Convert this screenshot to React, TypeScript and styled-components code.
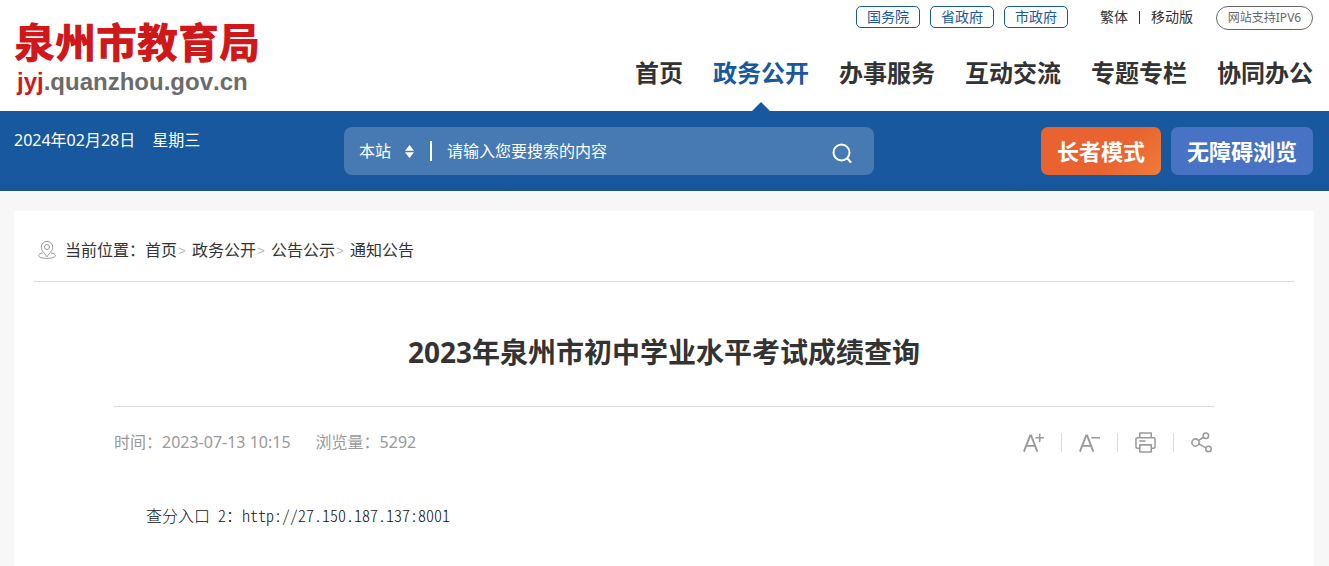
import React from "react";
import styled, { createGlobalStyle } from "styled-components";

const blue = "#17589f";

const GlobalStyle = createGlobalStyle`
  *, *::before, *::after { box-sizing: border-box; }
  body {
    margin: 0;
    background: #f7f7f7;
    color: #333;
    font-family: "Noto Sans", "Noto Sans CJK SC", sans-serif;
    font-size: 16px;
    line-height: 24px;
  }
  a { color: inherit; text-decoration: none; }
  button, input, select { font: inherit; color: inherit; border: 0; padding: 0; margin: 0; background: none; outline: 0; }
  button { cursor: pointer; }
`;

const Page = styled.div`
  display: flex;
  flex-direction: column;
  min-height: 100vh;
`;

const Header = styled.header`
  display: flex;
  justify-content: space-between;
  padding: 0 16px 0 14px;
  background: #fff;
`;

const Logo = styled.a`
  display: flex;
  flex-direction: column;
  gap: 4px;
  padding-top: 16px;
`;

const LogoName = styled.span`
  color: #d0181a;
  font-family: "Noto Sans CJK SC", sans-serif;
  font-size: 41px;
  font-weight: 900;
  line-height: 48px;
`;

const LogoDomain = styled.span`
  display: flex;
  padding-left: 3px;
  font-family: "Liberation Sans", sans-serif;
  font-size: 24px;
  font-weight: 700;
  font-kerning: none;
  line-height: 28px;
`;

const DomainPart = styled.span<{ $accent?: boolean }>`
  color: ${(p) => (p.$accent ? "#d0181a" : "#6b6b6b")};
`;

const HeaderSide = styled.div`
  display: flex;
  flex-direction: column;
  align-items: flex-end;
`;

const TopLinks = styled.div`
  display: flex;
  align-items: flex-start;
  padding-top: 6px;
  font-size: 14px;
  line-height: 22px;
`;

const GovLinks = styled.div`
  display: flex;
  gap: 10px;
  margin-right: 32px;
`;

const GovLink = styled.a`
  width: 64px;
  border: 1px solid ${blue};
  border-radius: 5px;
  color: ${blue};
  text-align: center;
  line-height: 20px;
`;

const Divider = styled.span<{ $height: number; $color: string; $width?: number }>`
  flex: none;
  width: ${(p) => p.$width ?? 1}px;
  height: ${(p) => p.$height}px;
  background: ${(p) => p.$color};
`;

const VersionLinks = styled.div`
  display: flex;
  align-items: center;
  gap: 11px;
  margin-right: 23px;
`;

const Ipv6Link = styled.a`
  width: 97px;
  border: 1px solid #666;
  border-radius: 12px;
  color: #666;
  font-size: 12px;
  text-align: center;
  line-height: 22px;
`;

const Nav = styled.nav`
  display: flex;
  gap: 30px;
  margin-top: 25px;
`;

const NavLink = styled.a<{ $active?: boolean }>`
  position: relative;
  height: 56px;
  color: ${(p) => (p.$active ? blue : "#333")};
  font-size: 24px;
  font-weight: 700;
  line-height: 36px;

  &::after {
    content: "";
    display: ${(p) => (p.$active ? "block" : "none")};
    position: absolute;
    bottom: 0;
    left: calc(50% - 9px);
    border: 9px solid transparent;
    border-top-width: 0;
    border-bottom-color: ${blue};
  }
`;

const Bar = styled.div`
  display: flex;
  align-items: flex-start;
  min-height: 80px;
  padding: 16px 16px 16px 14px;
  background: linear-gradient(#17589f, #17589f 72px, #1b5592);
  color: #fff;
`;

const DateText = styled.div`
  display: flex;
  flex: 0 0 330px;
  gap: 17px;
  padding-top: 1px;
`;

const Search = styled.form`
  display: flex;
  align-items: center;
  flex: 0 1 530px;
  height: 48px;
  padding: 0 22px 0 15px;
  border-radius: 8px;
  background: #477ab3;
`;

const ScopeLabel = styled.label`
  display: flex;
  align-items: center;
  margin-right: 16px;
`;

const Scope = styled.select`
  width: 46px;
  appearance: none;
`;

const SearchInput = styled.input`
  flex: 1;
  min-width: 0;
  margin-left: 15px;
  &::placeholder { color: #fff; opacity: 1; }
`;

const SearchButton = styled.button`
  display: flex;
  padding-top: 4px;
`;

const Modes = styled.div`
  display: flex;
  gap: 10px;
  margin-left: auto;
`;

const ModeButton = styled.button<{ $warm?: boolean }>`
  height: 48px;
  padding: 0 16px;
  border-radius: 7px;
  background: ${(p) => (p.$warm ? "linear-gradient(135deg, #e8632f 60%, #ef7c3b)" : "#4872c3")};
  font-size: 22px;
  font-weight: 700;
  white-space: nowrap;
`;

const Card = styled.main`
  flex: 1;
  margin: 20px 15px 0 14px;
  padding: 0 20px;
  background: #fff;
`;

const Crumbs = styled.nav`
  display: flex;
  align-items: center;
  height: 71px;
  padding: 8px 0 0 4px;
  border-bottom: 1px solid #ddd;
`;

const CrumbLabel = styled.span`
  margin-left: 9px;
`;

const CrumbArrow = styled.span`
  width: 15px;
  padding: 4px 0 0 1px;
  color: #bbb;
  font-family: "Liberation Mono", monospace;
  font-size: 13px;
`;

const Article = styled.article`
  padding: 0 80px 40px;
`;

const Title = styled.h1`
  margin: 0;
  padding: 50px 0 34px;
  border-bottom: 1px solid #ddd;
  font-size: 28px;
  line-height: 40px;
  text-align: center;
`;

const Meta = styled.div`
  display: flex;
  align-items: center;
  gap: 25px;
  height: 70px;
  color: #999;
`;

const Tools = styled.div`
  display: flex;
  align-items: center;
  gap: 17px;
  margin-left: auto;
  padding-right: 2px;
`;

const ToolButton = styled.button`
  display: flex;
`;

const Body = styled.p`
  margin: 26px 0 0;
  padding-left: 32px;
  color: #111;
  font-family: "Noto Sans CJK SC", sans-serif;
  font-weight: 300;
  font-feature-settings: "hwid";
`;

const stroke = { fill: "none", stroke: "currentColor", strokeLinecap: "round", strokeLinejoin: "round" } as const;

const SortArrows = () => (
  <svg width="9" height="13" viewBox="0 0 9 13" fill="#fff" aria-hidden="true">
    <path d="M4.5 0 9 5.7H0zM0 7.300h9L4.500 13z" />
  </svg>
);

const SearchIcon = () => (
  <svg width="20" height="20" viewBox="0 0 20 20" {...stroke} strokeWidth="2" aria-hidden="true">
    <circle cx="9.5" cy="9.5" r="8" />
    <path d="m15.5 15.5 3 3.5" />
  </svg>
);

const PinIcon = () => (
  <svg width="18" height="18" viewBox="0 0 18 18" {...stroke} stroke="#999" aria-hidden="true">
    <path d="M9 15.5C5.5 11.5 3.2 8.8 3.2 6.2a5.8 5.8 0 0 1 11.6 0c0 2.6-2.3 5.3-5.8 9.3z" />
    <circle cx="9" cy="6" r="2.5" />
    <path d="M4.500 12C2 12.500.7 13.300.7 14.500.7 16.300 4 17.400 9 17.400s8.300-1.100 8.300-2.900c0-1.200-1.300-2-3.800-2.500" />
  </svg>
);

const LetterIcon = ({ plus }: { plus?: boolean }) => (
  <svg width="21" height="21" viewBox="0 0 22 22" fill="none" stroke="#999" aria-hidden="true">
    <path d="M1 20.500 7.500 3.500h1L15 20.500M3.500 14.500h9.500" strokeWidth="2" />
    <path d={plus ? "M13 6h9M17.500 1.500v9" : "M13 6h9"} strokeWidth="1.600" />
  </svg>
);

const PrintIcon = () => (
  <svg width="21" height="21" viewBox="0 0 22 22" {...stroke} stroke="#999" strokeWidth="1.6" aria-hidden="true">
    <path d="M5 6V1h12v5M5 17H2.500Q1 17 1 15.500v-8Q1 6 2.500 6h17Q21 6 21 7.500v8q0 1.500-1.500 1.500H17M5 13.500h12V21H5zM5 9.500h5.500" />
  </svg>
);

const ShareIcon = () => (
  <svg width="21" height="21" viewBox="0 0 22 22" {...stroke} stroke="#999" strokeWidth="1.6" aria-hidden="true">
    <circle cx="4.7" cy="11" r="3.800" />
    <circle cx="15.500" cy="4" r="2.900" />
    <circle cx="18.300" cy="17.800" r="2.900" />
    <path d="m7.800 9 5.200-3.500M8.200 12.500l7.400 4.100" />
  </svg>
);

const govLinks = ["国务院", "省政府", "市政府"];
const navItems = ["首页", "政务公开", "办事服务", "互动交流", "专题专栏", "协同办公"];
const crumbs = ["首页", "政务公开", "公告公示", "通知公告"];
const tools = [
  { label: "放大字体", icon: <LetterIcon plus /> },
  { label: "缩小字体", icon: <LetterIcon /> },
  { label: "打印", icon: <PrintIcon /> },
  { label: "分享", icon: <ShareIcon /> },
];

export default function App() {
  return (
    <Page>
      <GlobalStyle />
      <Header>
        <Logo href="#">
          <LogoName>泉州市教育局</LogoName>
          <LogoDomain>
            <DomainPart $accent>jyj</DomainPart>
            <DomainPart>.quanzhou.gov.cn</DomainPart>
          </LogoDomain>
        </Logo>
        <HeaderSide>
          <TopLinks>
            <GovLinks>
              {govLinks.map((name) => (
                <GovLink href="#" key={name}>{name}</GovLink>
              ))}
            </GovLinks>
            <VersionLinks>
              <a href="#">繁体</a>
              <Divider $height={13} $color="#333" />
              <a href="#">移动版</a>
            </VersionLinks>
            <Ipv6Link href="#">网站支持IPV6</Ipv6Link>
          </TopLinks>
          <Nav>
            {navItems.map((name) => (
              <NavLink href="#" key={name} $active={name === "政务公开"}>{name}</NavLink>
            ))}
          </Nav>
        </HeaderSide>
      </Header>

      <Bar>
        <DateText>
          <span>2024年02月28日</span>
          <span>星期三</span>
        </DateText>
        <Search onSubmit={(e) => e.preventDefault()}>
          <ScopeLabel>
            <Scope aria-label="搜索范围">
              <option>本站</option>
            </Scope>
            <SortArrows />
          </ScopeLabel>
          <Divider $height={20} $width={2} $color="#fff" />
          <SearchInput aria-label="搜索" placeholder="请输入您要搜索的内容" />
          <SearchButton type="submit" aria-label="搜索"><SearchIcon /></SearchButton>
        </Search>
        <Modes>
          <ModeButton type="button" $warm>长者模式</ModeButton>
          <ModeButton type="button">无障碍浏览</ModeButton>
        </Modes>
      </Bar>

      <Card>
        <Crumbs>
          <PinIcon />
          <CrumbLabel>当前位置：</CrumbLabel>
          {crumbs.map((name, i) => (
            <React.Fragment key={name}>
              {i > 0 && <CrumbArrow>&gt;</CrumbArrow>}
              <a href="#">{name}</a>
            </React.Fragment>
          ))}
        </Crumbs>
        <Article>
          <Title>2023年泉州市初中学业水平考试成绩查询</Title>
          <Meta>
            <span>时间：2023-07-13 10:15</span>
            <span>浏览量：5292</span>
            <Tools>
              {tools.map((tool, i) => (
                <React.Fragment key={tool.label}>
                  {i > 0 && <Divider $height={19} $color="#ddd" />}
                  <ToolButton type="button" aria-label={tool.label}>{tool.icon}</ToolButton>
                </React.Fragment>
              ))}
            </Tools>
          </Meta>
          <Body>
            查分入口 2：<a href="http://27.150.187.137:8001">http://27.150.187.137:8001</a>
          </Body>
        </Article>
      </Card>
    </Page>
  );
}
